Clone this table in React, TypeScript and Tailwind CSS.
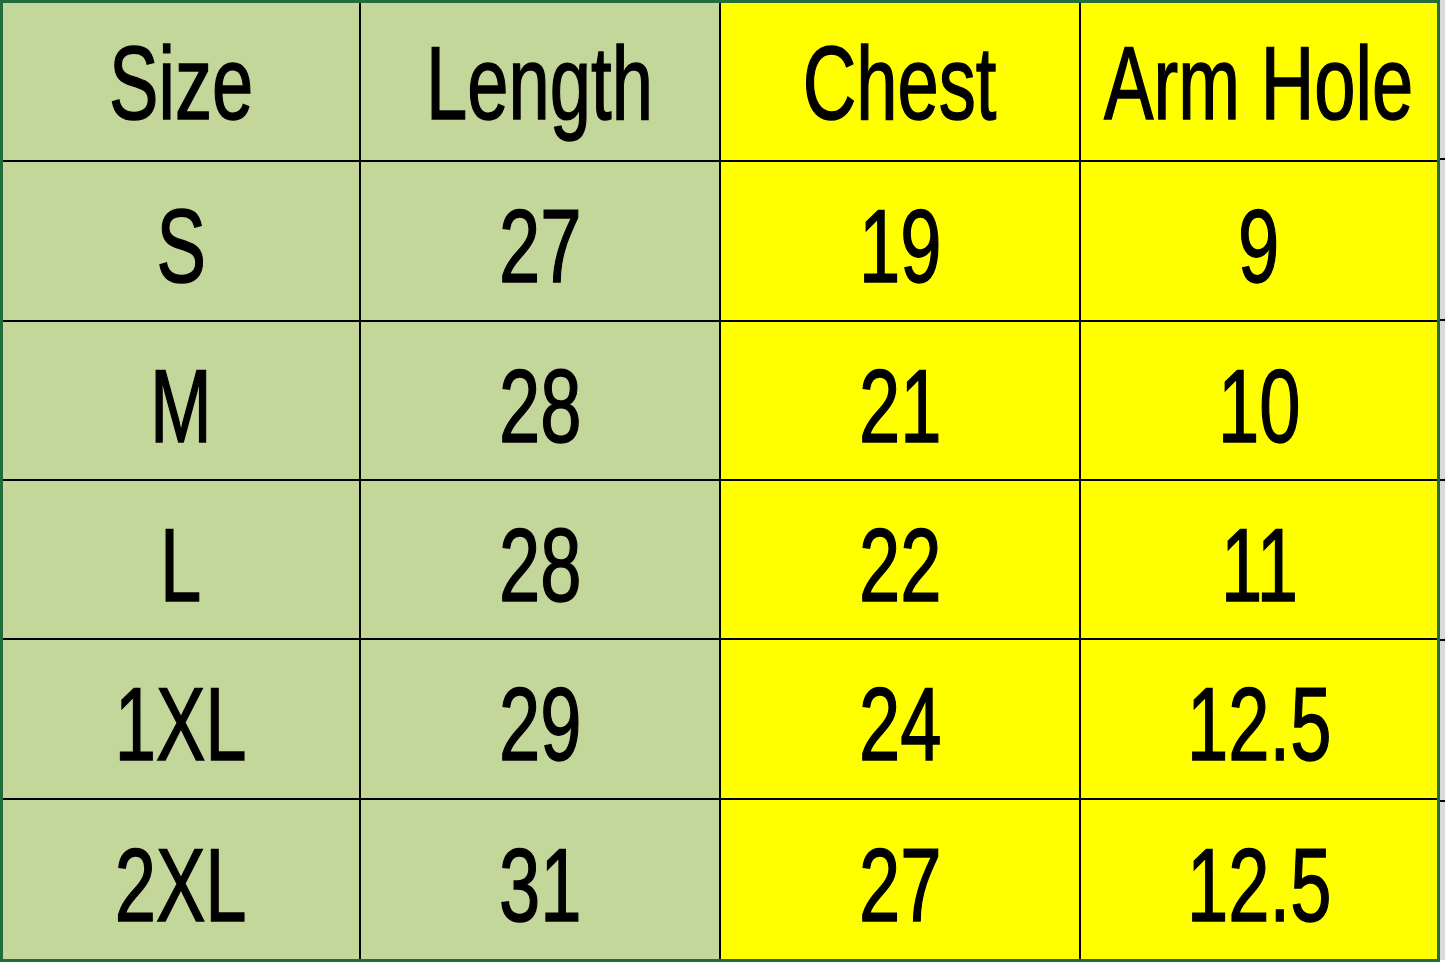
const header = ['Size', 'Length', 'Chest', 'Arm Hole'];

const rows = [
  ['S', '27', '19', '9'],
  ['M', '28', '21', '10'],
  ['L', '28', '22', '11'],
  ['1XL', '29', '24', '12.5'],
  ['2XL', '31', '27', '12.5'],
];

function Cell({ text, col, lastRow, head }: { text: string; col: number; lastRow: boolean; head?: boolean }) {
  const bg = col < 2 ? 'bg-[#c4d79b]' : 'bg-[#ffff00]';
  return (
    <div
      className={`flex items-center justify-center overflow-hidden border-black ${bg} ${col < 3 ? 'border-r-2' : ''} ${lastRow ? '' : 'border-b-2'} ${head ? 'pt-[4px]' : 'pt-[12px]'}`}
    >
      <span className="inline-block scale-x-[0.72] whitespace-nowrap text-[103px] leading-none text-black [-webkit-text-stroke:1.5px_black]">
        {text}
      </span>
    </div>
  );
}

export default function App() {
  return (
    <div
      className="flex h-[963px] w-[1445px] items-start bg-white"
      style={{ fontFamily: '"Liberation Sans", Arial, sans-serif' }}
    >
      <div className="grid h-[962px] w-[1440px] grid-cols-[358px_360px_360px_356px] grid-rows-6 border-[3px] border-[#236b3c]">
        {header.map((h, i) => (
          <Cell key={h} text={h} col={i} lastRow={false} head />
        ))}
        {rows.map((r, ri) =>
          r.map((v, ci) => <Cell key={`${ri}-${ci}`} text={v} col={ci} lastRow={ri === rows.length - 1} />)
        )}
      </div>
      <div className="flex h-[960px] w-[5px] flex-col bg-[#d9d9d9]">
        {[0, 1, 2, 3, 4, 5].map((i) => (
          <div key={i} className={`flex-1 ${i < 5 ? 'border-b-2 border-black' : ''}`} />
        ))}
      </div>
    </div>
  );
}
